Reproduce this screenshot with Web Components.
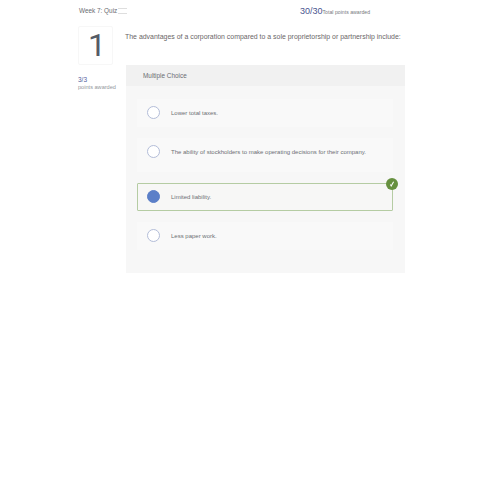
<!DOCTYPE html>
<html>
<head>
<meta charset="utf-8">
<style>
    html, body { margin: 0; padding: 0; background: #fff; }
    body { font-family: "Liberation Sans", Arial, sans-serif; }
</style>
</head>
<body>
<quiz-page>
    <quiz-header slot="header"></quiz-header>
    <question-score slot="side" number="1" score="3/3"></question-score>
    <question-body slot="main" text="The advantages of a corporation compared to a sole proprietorship or partnership include:">
        <answer-option>Lower total taxes.</answer-option>
        <answer-option tall>The ability of stockholders to make operating decisions for their company.</answer-option>
        <answer-option correct>Limited liability.</answer-option>
        <answer-option>Less paper work.</answer-option>
    </question-body>
</quiz-page>

<script>
class QuizPage extends HTMLElement {
    constructor() {
        super();
        this.attachShadow({ mode: 'open' });
        this.shadowRoot.innerHTML = `
            <style>
                :host { display: block; width: 500px; height: 500px; box-sizing: border-box; padding: 5px 95px 0 78px; }
                .row { display: flex; margin-top: 11px; }
                .side { width: 48px; flex: none; }
                .main { flex: 1; min-width: 0; }
            </style>
            <slot name="header"></slot>
            <div class="row">
                <div class="side"><slot name="side"></slot></div>
                <div class="main"><slot name="main"></slot></div>
            </div>
        `;
    }
}

class QuizHeader extends HTMLElement {
    constructor() {
        super();
        this.attachShadow({ mode: 'open' });
        this.shadowRoot.innerHTML = `
            <style>
                :host { display: flex; align-items: center; height: 10px; font-family: "Liberation Sans", Arial, sans-serif; color: #6a6d72; }
                .title { font-size: 6.4px; width: 40px; white-space: nowrap; padding-left: 1px; box-sizing: border-box; }
                .menu { width: 9px; height: 4px; border-top: 1px solid #dedede; border-bottom: 1px solid #dedede; margin-top: 2px; }
                .total { margin-left: 173px; margin-top: 2px; display: flex; align-items: baseline; white-space: nowrap; }
                .pts { font-size: 9px; color: #4a5590; }
                .lbl { font-size: 5.2px; color: #777a80; }
            </style>
            <span class="title">Week 7: Quiz</span>
            <span class="menu"></span>
            <span class="total"><span class="pts">30/30</span><span class="lbl">Total points awarded</span></span>
        `;
    }
}

class QuestionScore extends HTMLElement {
    constructor() {
        super();
        this.attachShadow({ mode: 'open' });
        const number = this.getAttribute('number') || '';
        const score = this.getAttribute('score') || '';
        this.shadowRoot.innerHTML = `
            <style>
                :host { display: block; font-family: "Liberation Sans", Arial, sans-serif; }
                .num {
                    width: 35px; height: 39px; box-sizing: border-box; border: 1px solid #f7f7f7; border-radius: 2px; padding: 0 0 1px 3px;
                    display: flex; align-items: center; justify-content: center;
                    font-family: Roboto, sans-serif; font-size: 32px; color: #545b66; line-height: 1;
                }
                .score { margin-top: 11px; font-size: 6.5px; line-height: 8px; color: #5460a0; }
                .cap { font-size: 5.6px; line-height: 6px; color: #94979c; white-space: nowrap; }
            </style>
            <div class="num">${number}</div>
            <div class="score">${score}</div>
            <div class="cap">points awarded</div>
        `;
    }
}

class QuestionBody extends HTMLElement {
    constructor() {
        super();
        this.attachShadow({ mode: 'open' });
        const text = this.getAttribute('text') || '';
        this.shadowRoot.innerHTML = `
            <style>
                :host { display: block; font-family: "Liberation Sans", Arial, sans-serif; }
                .text { height: 39px; padding-top: 6px; box-sizing: border-box; font-size: 6.95px; line-height: 10px; color: #6a6668; white-space: nowrap; margin-left: -1px; }
                .panel { background: #f7f7f7; height: 208px; }
                .head { height: 21px; background: #f1f1f1; padding-left: 17px; display: flex; align-items: center; font-size: 6.4px; color: #6a6d72; }
                .list { padding: 13px 12px 0 11px; display: flex; flex-direction: column; gap: 11px; }
            </style>
            <div class="text">${text}</div>
            <div class="panel">
                <div class="head">Multiple Choice</div>
                <div class="list"><slot></slot></div>
            </div>
        `;
    }
}

class AnswerOption extends HTMLElement {
    constructor() {
        super();
        this.attachShadow({ mode: 'open' });
        const correct = this.hasAttribute('correct');
        this.shadowRoot.innerHTML = `
            <style>
                :host { display: flex; position: relative; align-items: flex-start; height: 28px; box-sizing: border-box; padding: 7px 0 0 10px; background: #f9f9f9; font-size: 6px; color: #6d7075; white-space: nowrap; }
                :host([tall]) { height: 34px; }
                :host([correct]) { background: #f7f7f6; border: 1px solid #b5cca3; border-radius: 1px; padding: 6px 0 0 9px; }
                .radio { width: 13px; height: 13px; box-sizing: border-box; flex: none; border-radius: 50%; border: 1px solid #b3bdd8; background: #fff; margin-right: 11px; }
                :host([correct]) .radio { background: #5b7fc8; border-color: #5b7fc8; }
                .label { line-height: 13px; padding-top: 1px; }
                .check {
                    position: absolute; top: -6px; right: -6px; width: 12px; height: 12px; border-radius: 50%;
                    background: #66903f; display: flex; align-items: center; justify-content: center;
                }
            </style>
            <span class="radio"></span>
            <span class="label"><slot></slot></span>
            ${correct ? `<span class="check"><svg width="8" height="8" viewBox="0 0 8 8"><path d="M2.4 4.6 L3.2 6 L5.6 1.8" fill="none" stroke="#fff" stroke-width="1.1"/></svg></span>` : ''}
        `;
    }
}

customElements.define('quiz-page', QuizPage);
customElements.define('quiz-header', QuizHeader);
customElements.define('question-score', QuestionScore);
customElements.define('question-body', QuestionBody);
customElements.define('answer-option', AnswerOption);
</script>
</body>
</html>
